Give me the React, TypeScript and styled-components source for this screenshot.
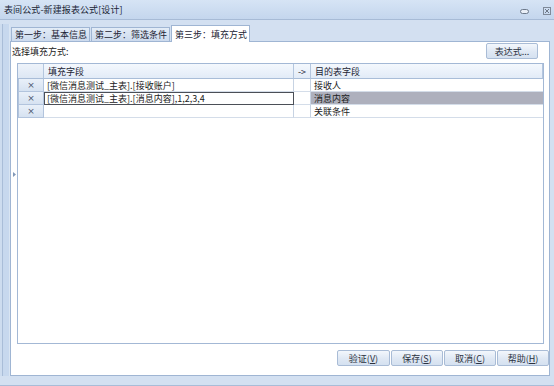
import React from "react";
import styled, { createGlobalStyle } from "styled-components";

const GlobalStyle = createGlobalStyle`
	html, body {
		margin: 0;
		padding: 0;
		background: #d3e0f1;
	}
	* {
		box-sizing: border-box;
	}
`;

const FONT = `"Noto Sans CJK SC", "Liberation Sans", sans-serif`;

const Window = styled.div`
	width: 554px;
	height: 386px;
	display: flex;
	flex-direction: column;
	background: #d3e0f1;
	font-family: ${FONT};
	font-size: 9px;
	color: #1b1b1b;
	overflow: hidden;
`;

const TitleBar = styled.div`
	height: 20px;
	display: flex;
	align-items: center;
	justify-content: space-between;
	padding: 0 3px 0 4px;
	background: linear-gradient(180deg, #d6e4f5 0%, #c4d6ed 100%);
	border-bottom: 1px solid #a7bbd6;
`;

const Title = styled.span`
	font-size: 9px;
	color: #1a2535;
	letter-spacing: 0.1px;
`;

const Controls = styled.div`
	display: flex;
	align-items: center;
	gap: 14px;
	padding-top: 3px;

	svg {
		display: block;
	}
`;

const Body = styled.div`
	flex: 1;
	display: flex;
	min-height: 0;
	padding: 4px 4px 9px 0;
	border-bottom: 1px solid #a9bcd7;
`;

const LeftFrame = styled.div`
	width: 10px;
	background: linear-gradient(
		90deg,
		#cddcef 0px,
		#cddcef 2px,
		#a9bdd8 2px,
		#a9bdd8 3px,
		#c7d8ee 3px,
		#c7d8ee 9px,
		#d9e5f3 9px
	);
`;

const Main = styled.div`
	flex: 1;
	display: flex;
	flex-direction: column;
	min-width: 0;
`;

const TabStrip = styled.div`
	height: 17px;
	display: flex;
	align-items: flex-end;
	padding-left: 1px;
`;

const Tab = styled.div<{ $active?: boolean }>`
	height: ${({ $active }) => ($active ? "17px" : "14px")};
	padding: 0 2px 0 3px;
	display: flex;
	align-items: center;
	border: 1px solid #9fb5d3;
	border-bottom: none;
	margin-right: 1px;
	background: ${({ $active }) =>
		$active ? "#ffffff" : "linear-gradient(180deg, #e3ecf7 0%, #ccdaed 100%)"};
	color: #1b2433;
	margin-bottom: ${({ $active }) => ($active ? "-1px" : "0")};
	position: relative;
	z-index: ${({ $active }) => ($active ? 1 : 0)};
`;

const Panel = styled.div`
	flex: 1;
	display: flex;
	flex-direction: column;
	background: #ffffff;
	border: 1px solid #9fb5d3;
	min-height: 0;
`;

const TopRow = styled.div`
	display: flex;
	justify-content: space-between;
	align-items: flex-start;
	padding: 1px 11px 3px 1px;
	height: 21px;
`;

const FieldLabel = styled.span`
	padding-top: 2px;
`;

const Button = styled.button<{ $w: number }>`
	width: ${({ $w }) => $w}px;
	height: 16px;
	padding: 0;
	font-family: ${FONT};
	font-size: 9px;
	color: #2a3140;
	border: 1px solid #a9bcd6;
	border-radius: 2px;
	background: linear-gradient(180deg, #f3f7fc 0%, #dfe8f4 55%, #d5e1f0 100%);
	display: flex;
	align-items: center;
	justify-content: center;

	u {
		text-decoration: underline;
	}
`;

const Middle = styled.div`
	flex: 1;
	display: flex;
	min-height: 0;
	padding-right: 5px;
`;

const Splitter = styled.div`
	width: 6px;
	display: flex;
	align-items: center;
	justify-content: center;
	padding-bottom: 58px;
`;

const Grid = styled.div`
	flex: 1;
	border: 1px solid #a3b8d5;
	display: grid;
	grid-template-columns: 26px 250px 17px 1fr;
	grid-auto-rows: 13px;
	grid-template-rows: 15px;
	align-content: start;
`;

const HeadCell = styled.div<{ $corner?: boolean }>`
	background: ${({ $corner }) =>
		$corner
			? "linear-gradient(180deg, #eef3fa 0%, #dde7f4 100%)"
			: "linear-gradient(180deg, #f4f8fd 0%, #e2ebf7 100%)"};
	border-right: 1px solid #b4c6de;
	border-bottom: 1px solid #a9bdd8;
	display: flex;
	align-items: center;
	padding-left: 4px;
	color: #1b2433;

	&:last-child {
		border-right: none;
	}
`;

const RowHead = styled.div`
	background: linear-gradient(180deg, #e9f0f9 0%, #d6e2f1 100%);
	border: 1px solid #b2c4dd;
	border-top: none;
	display: flex;
	align-items: center;
	justify-content: center;
	color: #4a5670;
	font-family: "DejaVu Sans", sans-serif;
	font-size: 9px;
	line-height: 1;
`;

const Cell = styled.div<{ $selected?: boolean; $editing?: boolean; $last?: boolean }>`
	display: flex;
	align-items: center;
	padding-left: ${({ $editing }) => ($editing ? "2px" : "3px")};
	white-space: nowrap;
	overflow: hidden;
	background: ${({ $selected }) => ($selected ? "#aeb0bd" : "#ffffff")};
	border-right: ${({ $last }) => ($last ? "none" : "1px solid #c7d3e3")};
	border-bottom: 1px solid #d4dde9;
	${({ $editing }) => ($editing ? "border: 1px solid #4b4f57;" : "")}
	color: #1b1b1b;
`;

const Footer = styled.div`
	display: flex;
	justify-content: flex-end;
	gap: 1px;
	padding: 6px 0 9px 0;
`;

const rows = [
	{ source: "[微信消息测试_主表].[接收账户]", target: "接收人" },
	{ source: "[微信消息测试_主表].[消息内容],1,2,3,4", target: "消息内容", editing: true },
	{ source: "", target: "关联条件" },
];

const MinimizeIcon = () => (
	<svg width="9" height="5" viewBox="0 0 9 5">
		<rect x="0.5" y="0.5" width="8" height="4" rx="2" fill="#e9eff7" stroke="#6d7a8c" />
	</svg>
);

const CloseIcon = () => (
	<svg width="8" height="8" viewBox="0 0 8 8">
		<rect x="0.5" y="0.5" width="7" height="7" fill="none" stroke="#7f8a99" />
		<path d="M2 2 L6 6 M6 2 L2 6" stroke="#6d7786" strokeWidth="1" />
	</svg>
);

const SplitArrow = () => (
	<svg width="3" height="5" viewBox="0 0 3 5">
		<path d="M0 0 L3 2.5 L0 5 Z" fill="#8198b8" />
	</svg>
);

const App: React.FC = () => {
	return (
		<>
			<GlobalStyle />
			<Window>
				<TitleBar>
					<Title>表间公式-新建报表公式[设计]</Title>
					<Controls>
						<MinimizeIcon />
						<CloseIcon />
					</Controls>
				</TitleBar>
				<Body>
					<LeftFrame />
					<Main>
						<TabStrip>
							<Tab>第一步：基本信息</Tab>
							<Tab>第二步：筛选条件</Tab>
							<Tab $active>第三步：填充方式</Tab>
						</TabStrip>
						<Panel>
							<TopRow>
								<FieldLabel>选择填充方式:</FieldLabel>
								<Button $w={52}>表达式...</Button>
							</TopRow>
							<Middle>
								<Splitter>
									<SplitArrow />
								</Splitter>
								<Grid>
									<HeadCell $corner />
									<HeadCell>填充字段</HeadCell>
									<HeadCell>-&gt;</HeadCell>
									<HeadCell>目的表字段</HeadCell>
									{rows.map((r, i) => (
										<React.Fragment key={i}>
											<RowHead>×</RowHead>
											<Cell $editing={r.editing}>{r.source}</Cell>
											<Cell />
											<Cell $selected={r.editing} $last>
												{r.target}
											</Cell>
										</React.Fragment>
									))}
								</Grid>
							</Middle>
							<Footer>
								<Button $w={53}>
									验证(<u>V</u>)
								</Button>
								<Button $w={52}>
									保存(<u>S</u>)
								</Button>
								<Button $w={52}>
									取消(<u>C</u>)
								</Button>
								<Button $w={52}>
									帮助(<u>H</u>)
								</Button>
							</Footer>
						</Panel>
					</Main>
				</Body>
			</Window>
		</>
	);
};

export default App;
